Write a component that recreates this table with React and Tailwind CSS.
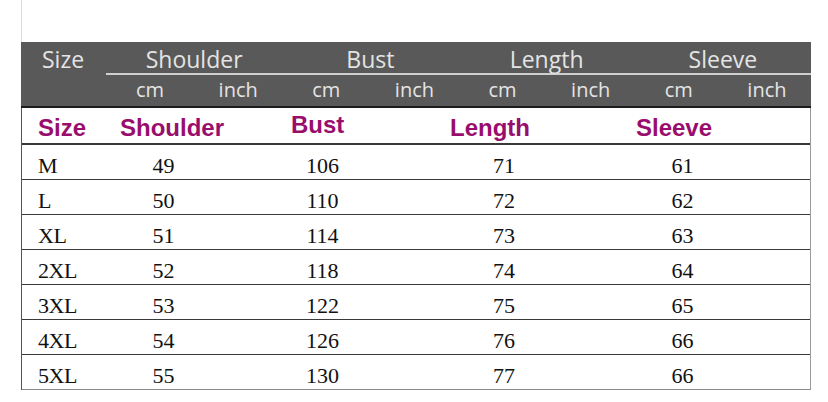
import React from "react";

const groups = ["Shoulder", "Bust", "Length", "Sleeve"];
const rows = [
  ["M", "49", "106", "71", "61"],
  ["L", "50", "110", "72", "62"],
  ["XL", "51", "114", "73", "63"],
  ["2XL", "52", "118", "74", "64"],
  ["3XL", "53", "122", "75", "65"],
  ["4XL", "54", "126", "76", "66"],
  ["5XL", "55", "130", "77", "66"],
];

export default function App() {
  return (
    <div className="w-[828px] h-[402px] bg-white overflow-hidden">
      <div className="ml-[21px] w-[790px] h-[42px] border-l border-[#dcdcdc]" />
      <div className="ml-[21px] w-[790px]">
        {/* dark header */}
        <div
          className="flex h-[66px] bg-[#595959] border-b-2 border-[#1c1c1c] text-[#e4e4e4]"
          style={{ fontFamily: '"Open Sans", "Noto Sans", sans-serif' }}
        >
          <div className="w-[85px] pl-[21px] pt-[2px] text-[23px] leading-[30px]">
            Size
          </div>
          <div className="flex-1 flex flex-col">
            <div className="grid grid-cols-4 h-[33px] border-b-2 border-[#cfcfcf]">
              {groups.map((g) => (
                <div
                  key={g}
                  className="text-center text-[23px] leading-[30px] pt-[2px]"
                >
                  {g}
                </div>
              ))}
            </div>
            <div className="grid grid-cols-8 flex-1">
              {groups.map((g) => (
                <React.Fragment key={g}>
                  <div className="text-center text-[20px] leading-[28px] pt-[1px]">cm</div>
                  <div className="text-center text-[20px] leading-[28px] pt-[1px]">inch</div>
                </React.Fragment>
              ))}
            </div>
          </div>
        </div>

        {/* body */}
        <div className="border-l border-[#555] border-r border-r-[#9a9a9a]">
          <div
            className="flex h-[37px] border-b-2 border-[#3a3a3a] text-[#990d6d] font-bold text-[24px] leading-[26px]"
            style={{ fontFamily: '"Liberation Sans", Arial, sans-serif' }}
          >
            <div className="w-[98px] pl-[16px] pt-[7px]">Size</div>
            <div className="w-[171px] pt-[7px]">Shoulder</div>
            <div className="w-[159px] pt-[4px]">Bust</div>
            <div className="w-[186px] pt-[7px]">Length</div>
            <div className="flex-1 pt-[7px]">Sleeve</div>
          </div>
          {rows.map((r, i) => (
            <div
              key={r[0]}
              className={`grid grid-cols-[100px_83px_235px_128px_229px_1fr] h-[35px] items-center text-[#111] text-[22px] ${
                i === rows.length - 1 ? "border-b border-[#8a8a8a]" : "border-b-[1.5px] border-[#3a3a3a]"
              }`}
              style={{ fontFamily: '"Liberation Serif", "Times New Roman", serif' }}
            >
              <div className="pl-[16px] pt-[4px] tracking-[-0.5px]">{r[0]}</div>
              <div className="text-center pt-[4px]">{r[1]}</div>
              <div className="text-center pt-[4px]">{r[2]}</div>
              <div className="text-center pt-[4px]">{r[3]}</div>
              <div className="text-center pt-[4px]">{r[4]}</div>
              <div />
            </div>
          ))}
        </div>
      </div>
    </div>
  );
}
